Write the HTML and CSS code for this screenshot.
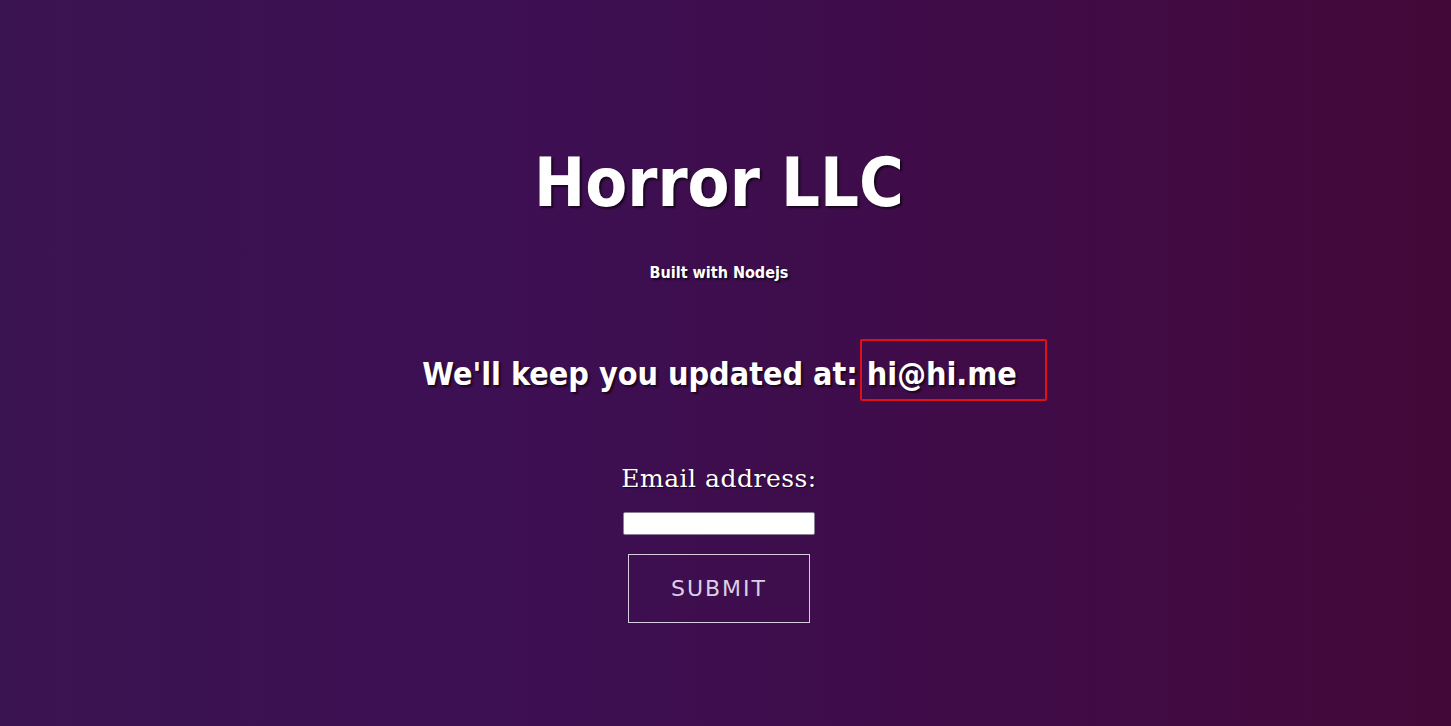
FILE: index.html
```html
<!DOCTYPE html>
<html lang="en">
<head>
<meta charset="utf-8">
<title>Horror LLC</title>
<link rel="stylesheet" href="styles.css">
</head>
<body>
<main class="page">
  <h1 class="title">Horror LLC</h1>
  <p class="subtitle">Built with Nodejs</p>
  <h2 class="headline">We'll keep you updated at: <span class="email-box">hi@hi.me</span></h2>
  <form class="signup">
    <label class="label" for="email">Email address:</label>
    <input class="input" id="email" type="email">
    <button class="submit" type="button">SUBMIT</button>
  </form>
</main>
</body>
</html>
```

FILE: styles.css
```css
html, body {
  margin: 0;
  padding: 0;
  height: 100%;
}
body {
  background: linear-gradient(to right, #3a1450 0%, #3d0f53 35%, #400b45 75%, #420837 100%);
  font-family: "DejaVu Sans", sans-serif;
  color: #fff;
  overflow: hidden;
}
.page {
  display: flex;
  flex-direction: column;
  align-items: center;
  padding-top: 143px;
  padding-right: 13px;
}
.title {
  margin: 0;
  font-family: "DejaVu Sans Condensed", "DejaVu Sans", sans-serif;
  font-size: 68px;
  font-weight: bold;
  line-height: 80px;
  text-shadow: 2px 2px 2px rgba(0,0,0,0.6);
}
.subtitle {
  margin: 41px 0 0;
  font-family: "DejaVu Sans Condensed", "DejaVu Sans", sans-serif;
  font-size: 16px;
  font-weight: bold;
  line-height: 18px;
  text-shadow: 2px 2px 2px rgba(0,0,0,0.6);
}
.headline {
  margin: 57px 0 0;
  padding-left: 31px;
  font-family: "DejaVu Sans Condensed", "DejaVu Sans", sans-serif;
  font-size: 32px;
  font-weight: bold;
  line-height: 38px;
  text-shadow: 2px 2px 2px rgba(0,0,0,0.6);
}
.email-box {
  display: inline-block;
  border: 2px solid #e0101a;
  border-radius: 2px;
  padding: 14px 28px 6px 5px;
  margin-left: -8px;
}
.signup {
  margin-top: 63px;
  display: flex;
  flex-direction: column;
  align-items: center;
}
.label {
  font-family: "DejaVu Serif", serif;
  font-size: 25px;
  line-height: 30px;
  letter-spacing: 0.5px;
  text-shadow: 1px 1px 1px rgba(0,0,0,0.6);
}
.input {
  margin-top: 18px;
  width: 192px;
  height: 23px;
  box-sizing: border-box;
  border: 1px solid #8a7f95;
  border-radius: 2px;
  background: #fff;
  padding: 0;
}
.submit {
  margin-top: 19px;
  width: 182px;
  height: 69px;
  background: transparent;
  border: 1px solid #d8cce0;
  color: #dccfe4;
  font-family: "DejaVu Sans", sans-serif;
  font-size: 22px;
  letter-spacing: 2px;
  padding: 0;
}
```
